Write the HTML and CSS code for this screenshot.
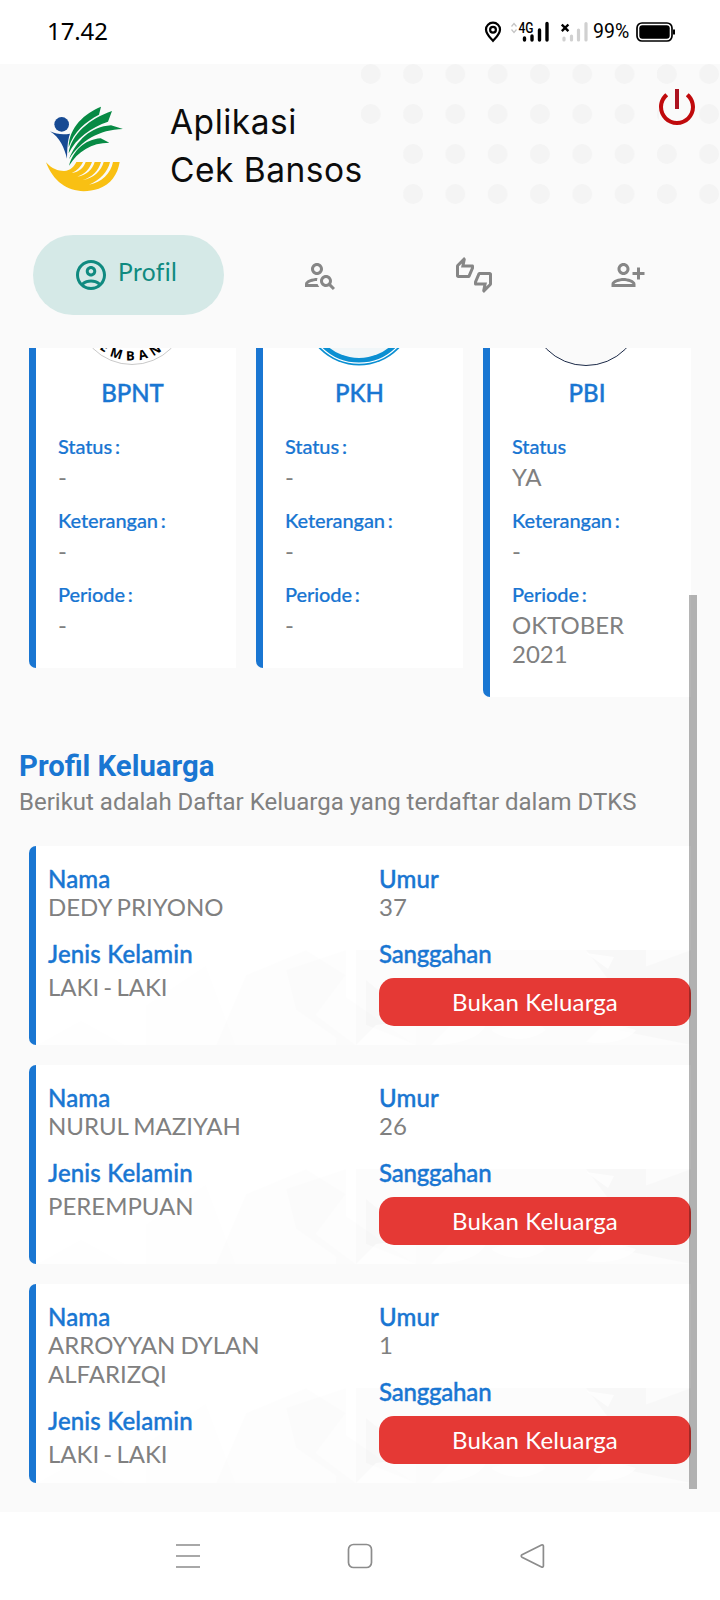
FILE: index.html
```html
<!DOCTYPE html>
<html lang="id">
<head>
  <meta charset="UTF-8">
  <title>Aplikasi Cek Bansos</title>
  <link rel="stylesheet" href="styles.css">
</head>
<body>
  <!-- shared faint triangle pattern for the family cards -->
  <svg width="0" height="0" class="defs">
    <symbol id="pattern" viewBox="0 0 655 95">
      <g fill="#000">
        <path opacity=".004" d="M0 95l45-25 45 25zM110 95V55l60-40 30 80z"/>
        <path opacity=".006" d="M180 95l30-70 60-25 40 25-30 40 40 30z"/>
        <path opacity=".008" d="M250 20l60-20v95l-50-35zM300 40l80 55h-80z"/>
        <path opacity=".012" d="M320 0h335v95H320z"/>
        <path opacity=".016" d="M330 30l50 40v25l-50-20zM550 0h60v30l-30 10zM600 20l55-20v60zM655 60v35l-75-15z"/>
      </g>
      <g fill="#fff">
        <path opacity=".7" d="M340 75l40-5v25h-60zM455 80c15 12 40 12 55 0l-15-12zM395 95c30 0 50-8 55-20l-30-5zM550 92c25 4 45-4 50-12l-30-8zM550 3l22 16 6-12z"/>
      </g>
    </symbol>
  </svg>

  <div class="statusbar">
    <span class="time">17.42</span>
    <div class="status-icons">
      <svg class="pin" width="18" height="22" viewBox="0 0 18 22">
        <path d="M9 1.700c-4 0-7 3-7 6.800 0 4.600 4 7.900 7 11.300 3-3.400 7-6.700 7-11.300 0-3.800-3-6.800-7-6.800z" fill="none" stroke="#000" stroke-width="2.200"/>
        <circle cx="9" cy="8.700" r="2.900" fill="none" stroke="#000" stroke-width="2.200"/>
      </svg>
      <svg class="signal" width="40" height="22" viewBox="0 0 40 22">
        <path d="M1.500 5.500l2.500-3 2.500 3M1.500 8.500l2.500 3 2.500-3" fill="none" stroke="#c4c4c4" stroke-width="1.200"/>
        <text x="8.500" y="12" textLength="15" lengthAdjust="spacingAndGlyphs">4G</text>
        <path d="M14.500 17v2M22 15v4M29.500 9v10M37 2.500V19" stroke="#000" stroke-width="3.400" stroke-linecap="round"/>
      </svg>
      <svg class="signal-off" width="28" height="22" viewBox="0 0 28 22">
        <path d="M.8 3.500l6.600 6.600M7.400 3.500L.8 10.100" stroke="#000" stroke-width="2.400"/>
        <path d="M3 17v2M10.500 15v4M17.500 9v10M25 2.500V19" stroke="#d0d0d0" stroke-width="3.200" stroke-linecap="round"/>
      </svg>
      <span class="percent">99%</span>
      <svg class="battery" width="40" height="22" viewBox="0 0 40 22">
        <rect x="1" y="2" width="35" height="18" rx="5" fill="none" stroke="#000" stroke-width="1.700"/>
        <rect x="3.300" y="4.200" width="30.400" height="13.600" rx="3" fill="#000"/>
        <path d="M38 8.500v5" stroke="#000" stroke-width="2"/>
      </svg>
    </div>
  </div>

  <header class="header">
    <svg class="dots" width="361" height="156" viewBox="0 0 361 156">
      <defs>
        <pattern id="dot" width="42.300" height="40" patternUnits="userSpaceOnUse">
          <circle cx="11.700" cy="10" r="10" fill="#f4f4f4"/>
        </pattern>
      </defs>
      <rect width="300" height="76" fill="url(#dot)"/>
      <rect x="294" width="67" height="26" fill="url(#dot)"/>
      <rect x="336" y="26" width="25" height="50" fill="url(#dot)"/>
      <rect x="42.300" y="76" width="319" height="80" fill="url(#dot)"/>
    </svg>
    <svg class="logo" width="80" height="88" viewBox="135 315 240 264">
      <circle cx="185" cy="373" r="22" fill="#174a93"/>
      <path fill="#174a93" d="M150 394c18 9 40 11 60 7-8 22-8 46-9 75-7-30-22-65-51-82z"/>
      <g fill="#078a44">
        <path d="M303 320c-48 20-96 60-97 122 16-48 50-76 91-98z"/>
        <path d="M336 333c-66 22-123 70-130 127 22-46 68-78 118-95z"/>
        <path d="M207 478c22-56 65-98 126-102l36 11c-72 2-126 34-162 91z"/>
        <path d="M207 497c14-46 46-78 95-82l26 13c-54 0-94 26-121 69z"/>
      </g>
      <path fill="#f9c013" d="M138 487C156 507 174 513 192 513C212 512 222 500 229 486H249C243 500 232 512 215 519C238 516 251 503 257 486H276C269 507 255 522 232 530C261 526 277 508 284 486H303C296 511 277 532 247 541C281 535 304 512 311 486H330C323 516 301 540 267 554C306 547 332 520 339 486H359C353 524 332 553 296 566C228 588 166 561 138 487Z"/>
    </svg>
    <h1>Aplikasi<br>Cek Bansos</h1>
    <svg class="power" width="48" height="48" viewBox="0 0 24 24">
      <path fill="#c00a0c" d="M17.830 5.170l-1.420 1.420C17.990 7.860 19 9.810 19 12c0 3.870-3.130 7-7 7s-7-3.130-7-7c0-2.190 1.010-4.140 2.580-5.420L6.170 5.170C4.230 6.820 3 9.260 3 12c0 4.970 4.030 9 9 9s9-4.030 9-9c0-2.740-1.230-5.180-3.170-6.830z"/>
      <path fill="#ac1320" d="M13 3h-2v10h2V3z"/>
    </svg>
  </header>

  <nav class="tabs">
    <a class="tab active">
      <svg width="36" height="36" viewBox="0 0 24 24"><path d="M12 2C6.480 2 2 6.480 2 12s4.480 10 10 10 10-4.480 10-10S17.520 2 12 2zM7.350 18.500C8.660 17.560 10.260 17 12 17s3.340.56 4.650 1.500C15.340 19.440 13.740 20 12 20s-3.340-.56-4.650-1.500zm10.790-1.380C16.450 15.800 14.320 15 12 15s-4.450.8-6.140 2.120C4.700 15.730 4 13.950 4 12c0-4.420 3.580-8 8-8s8 3.580 8 8c0 1.950-.7 3.730-1.860 5.120z"/><path d="M12 6c-1.930 0-3.500 1.570-3.500 3.500S10.070 13 12 13s3.500-1.570 3.500-3.500S13.930 6 12 6zm0 5c-.83 0-1.500-.67-1.500-1.500S11.170 8 12 8s1.500.67 1.500 1.500S12.830 11 12 11z"/></svg>
      <span>Profil</span>
    </a>
    <a class="tab">
      <svg width="36" height="36" viewBox="0 0 24 24"><path d="M10 12c2.210 0 4-1.790 4-4s-1.790-4-4-4-4 1.790-4 4 1.790 4 4 4zm0-6c1.100 0 2 .9 2 2s-.9 2-2 2-2-.9-2-2 .9-2 2-2zM4 18c.22-.72 3.310-2 6-2 0-.7.13-1.370.35-1.990C7.620 13.910 2 15.270 2 18v2h9.540c-.52-.58-.93-1.250-1.190-2H4zM19.430 18.020c.36-.59.57-1.280.57-2.020 0-2.210-1.790-4-4-4s-4 1.790-4 4 1.790 4 4 4c.74 0 1.430-.22 2.020-.57L20.590 22 22 20.590l-2.570-2.570zM16 18c-1.100 0-2-.9-2-2s.9-2 2-2 2 .9 2 2-.9 2-2 2z"/></svg>
    </a>
    <a class="tab">
      <svg width="36" height="36" viewBox="0 0 24 24"><path d="M12 6c0-.55-.45-1-1-1H5.820l.66-3.180.02-.23c0-.31-.13-.59-.33-.8L5.380 0 .44 4.940C.17 5.210 0 5.590 0 6v6.500c0 .83.67 1.500 1.500 1.500h6.750c.62 0 1.150-.38 1.380-.91l2.260-5.290c.07-.17.11-.36.11-.55V6zm-2 1.130L7.920 12H2V6.210l1.930-1.930L3.360 7H10v.13zM22.500 10h-6.750c-.62 0-1.150.38-1.380.91l-2.260 5.290c-.07.17-.11.36-.11.55V18c0 .55.45 1 1 1h5.180l-.66 3.180-.02.24c0 .31.13.59.33.8l.79.78 4.940-4.940c.27-.27.44-.65.44-1.060v-6.500c0-.83-.67-1.500-1.500-1.500zm-.5 7.790l-1.930 1.930.57-2.720H14v-.13L16.080 12H22v5.790z"/></svg>
    </a>
    <a class="tab">
      <svg width="36" height="36" viewBox="0 0 24 24"><path d="M13 8c0-2.210-1.790-4-4-4S5 5.790 5 8s1.790 4 4 4 4-1.790 4-4zm-2 0c0 1.100-.9 2-2 2s-2-.9-2-2 .9-2 2-2 2 .9 2 2zM1 18v2h16v-2c0-2.660-5.330-4-8-4s-8 1.340-8 4zm2 0c.2-.71 3.300-2 6-2 2.690 0 5.770 1.280 6 2H3zM20 15v-3h3v-2h-3V7h-2v3h-3v2h3v3h2z"/></svg>
    </a>
  </nav>

  <main class="content">
    <section class="programs">
      <div class="program">
        <svg class="badge" width="112" height="112" viewBox="0 0 112 112">
          <circle cx="56" cy="55" r="55.500" fill="#fff" stroke="#bbb" stroke-width=".8"/>
          <path id="arc" d="M5.500 56a50.500 50.500 0 0 0 101 0" fill="none"/>
          <text class="badge-text"><textPath href="#arc" startOffset="50.500%" text-anchor="middle">EMBAN</textPath></text>
        </svg>
        <h2>BPNT</h2>
        <dl>
          <dt>Status :</dt><dd>-</dd>
          <dt>Keterangan :</dt><dd>-</dd>
          <dt>Periode :</dt><dd>-</dd>
        </dl>
      </div>
      <div class="program">
        <svg class="badge" width="112" height="112" viewBox="0 0 112 112">
          <circle cx="56" cy="56" r="55.500" fill="#0a8fd2"/>
          <circle cx="56" cy="56" r="53.200" fill="none" stroke="#fff" stroke-width="1.200"/>
          <circle cx="56" cy="56" r="48" fill="#f0f6f8"/>
        </svg>
        <h2>PKH</h2>
        <dl>
          <dt>Status :</dt><dd>-</dd>
          <dt>Keterangan :</dt><dd>-</dd>
          <dt>Periode :</dt><dd>-</dd>
        </dl>
      </div>
      <div class="program">
        <svg class="badge" width="112" height="112" viewBox="0 0 112 112">
          <circle cx="56" cy="56" r="55.500" fill="#fafafa" stroke="#1c2a48"/>
        </svg>
        <h2>PBI</h2>
        <dl>
          <dt>Status</dt><dd>YA</dd>
          <dt>Keterangan :</dt><dd>-</dd>
          <dt>Periode :</dt><dd>OKTOBER 2021</dd>
        </dl>
      </div>
    </section>

    <section class="family">
      <h3>Profil Keluarga</h3>
      <p class="subtitle">Berikut adalah Daftar Keluarga yang terdaftar dalam DTKS</p>

      <div class="member">
        <svg class="member-bg"><use href="#pattern"/></svg>
        <div class="col">
          <span class="label">Nama</span>
          <span class="value name">DEDY PRIYONO</span>
          <span class="label">Jenis Kelamin</span>
          <span class="value gender">LAKI - LAKI</span>
        </div>
        <div class="col">
          <span class="label">Umur</span>
          <span class="value name">37</span>
          <span class="label tight">Sanggahan</span>
          <button>Bukan Keluarga</button>
        </div>
      </div>

      <div class="member">
        <svg class="member-bg"><use href="#pattern"/></svg>
        <div class="col">
          <span class="label">Nama</span>
          <span class="value name">NURUL MAZIYAH</span>
          <span class="label">Jenis Kelamin</span>
          <span class="value gender">PEREMPUAN</span>
        </div>
        <div class="col">
          <span class="label">Umur</span>
          <span class="value name">26</span>
          <span class="label tight">Sanggahan</span>
          <button>Bukan Keluarga</button>
        </div>
      </div>

      <div class="member">
        <svg class="member-bg"><use href="#pattern"/></svg>
        <div class="col">
          <span class="label">Nama</span>
          <span class="value name">ARROYYAN DYLAN ALFARIZQI</span>
          <span class="label">Jenis Kelamin</span>
          <span class="value gender">LAKI - LAKI</span>
        </div>
        <div class="col">
          <span class="label">Umur</span>
          <span class="value name">1</span>
          <span class="label tight">Sanggahan</span>
          <button>Bukan Keluarga</button>
        </div>
      </div>
    </section>
    <div class="scrollbar"></div>
  </main>

  <footer class="navbar">
    <svg width="26" height="26" viewBox="0 0 26 26"><path d="M1 2h24M1 13h24M1 24h24"/></svg>
    <svg width="26" height="26" viewBox="0 0 26 26"><rect x="1.500" y="1.500" width="23" height="23" rx="5"/></svg>
    <svg width="26" height="26" viewBox="0 0 26 26"><path d="M3 11.800L22.500 2c1-.5 1.900 0 1.900 1v20c0 1-.9 1.500-1.900 1L3 14.200c-1-.6-1-1.800 0-2.400z"/></svg>
  </footer>
</body>
</html>
```

FILE: styles.css
```css
* {
  box-sizing: border-box;
}
body {
  margin: 0;
  width: 720px;
  height: 1600px;
  display: flex;
  flex-direction: column;
  overflow: hidden;
  background-color: #fafafa;
  font-family: Lato, sans-serif;
  font-size: 24px;
  line-height: 29px;
}
h1, h2, h3, p, dl, dd {
  margin: 0;
}
svg {
  display: block;
  flex-shrink: 0;
}
.defs {
  position: absolute;
}

/* Status bar */
.statusbar {
  flex: 0 0 64px;
  display: flex;
  align-items: center;
  justify-content: space-between;
  padding: 0 44px 0 47px;
  background: #fff;
  color: #000;
}
.time {
  margin-top: -3px;
  font-family: "Noto Sans", sans-serif;
  font-size: 24px;
  letter-spacing: -0.1px;
}
.status-icons {
  display: flex;
  align-items: center;
}
.signal {
  margin-left: 8px;
}
.signal text {
  font: 500 14px Roboto, sans-serif;
}
.signal-off {
  margin-left: 11px;
}
.percent {
  margin: -1px 0 0 4px;
  width: 39px;
  font-family: Roboto, sans-serif;
  font-size: 19.5px;
}
.battery {
  margin-left: 4px;
}

/* Header */
.header {
  position: relative;
  flex: 0 0 156px;
  display: flex;
  padding-left: 45px;
}
.dots {
  position: absolute;
  top: 0;
  right: 0;
}
.logo {
  margin-top: 41px;
}
.header h1 {
  position: relative;
  margin: 34px 0 0 45px;
  font-family: Inter, sans-serif;
  font-size: 33.5px;
  font-weight: 400;
  letter-spacing: 0.5px;
  line-height: 48px;
  color: #0c0c0c;
}
.power {
  position: relative;
  margin: 19px 19px 0 auto;
}

/* Tabs */
.tabs {
  flex: 0 0 128px;
  display: grid;
  grid-template-columns: 191px 192px 116px 192px;
  padding: 15px 0 0 33px;
}
.tab {
  height: 80px;
  display: flex;
  align-items: center;
  justify-content: center;
  color: #868686;
  fill: #868686;
}
.tab.active {
  justify-content: flex-start;
  padding-left: 40px;
  gap: 9px;
  border-radius: 40px;
  background: #d5e9e7;
  color: #0f8a80;
  fill: #0f8a80;
}
.tab.active span {
  margin-top: -8px;
  font-size: 24.5px;
  letter-spacing: 0.4px;
}

/* Content */
.content {
  position: relative;
  flex: 1;
  overflow: hidden;
}
.programs {
  display: flex;
  align-items: flex-start;
  gap: 20px;
  margin: -114px 0 0 29px;
}
.program {
  width: 207px;
  padding: 20px 22px 29px;
  background: #fff;
  border-left: 7px solid #1976d2;
  border-radius: 7px 0 0 7px;
  word-spacing: -2px;
}
.program:last-child {
  width: 208px;
}
.badge {
  margin: 0 auto 12px 18px;
}
.badge-text {
  font: 700 13px "Open Sans", sans-serif;
  letter-spacing: 5px;
}
.program h2 {
  margin: 0 7px 27px 0;
  font-size: 24px;
  font-weight: 500;
  text-align: center;
  color: #1976d2;
  -webkit-text-stroke: 0.4px #1976d2;
}
.program dt {
  margin-bottom: 4px;
  font-size: 20px;
  font-weight: 500;
  line-height: 24px;
  letter-spacing: -0.1px;
  color: #1976d2;
  -webkit-text-stroke: 0.2px #1976d2;
}
.program dd {
  margin-bottom: 17px;
  color: #808080;
}
.program dd:last-child {
  margin-bottom: 0;
}

/* Family */
.family {
  margin-top: 53px;
}
.family h3 {
  padding-left: 19px;
  font: 700 29.3px/33px Roboto, sans-serif;
  color: #1976d2;
}
.subtitle {
  position: relative;
  margin: 5px 0 30px;
  padding-left: 19px;
  font: 24px/28px Roboto, sans-serif;
  color: #808080;
}
.member {
  position: relative;
  display: grid;
  grid-template-columns: 331px 312px;
  width: 662px;
  height: 199px;
  margin: 0 0 20px 29px;
  padding: 18px 0 0 12px;
  background: #fff;
  border-left: 7px solid #1976d2;
  border-radius: 7px 0 0 7px;
}
.member-bg {
  position: absolute;
  left: 0;
  bottom: 0;
  width: 655px;
  height: 95px;
}
.col {
  position: relative;
  display: flex;
  flex-direction: column;
}
.label {
  font-weight: 500;
  color: #1976d2;
  letter-spacing: 0.15px;
  -webkit-text-stroke: 0.4px #1976d2;
}
.label.tight {
  letter-spacing: -0.2px;
}
.value {
  color: #808080;
}
.name {
  width: 240px;
  margin: -1px 0 18px;
  word-spacing: -1px;
}
.gender {
  margin-top: 4px;
  word-spacing: -2px;
}
button {
  height: 48px;
  margin-top: 10px;
  padding: 0 0 2px;
  border: none;
  border-radius: 15px;
  background: #e53935;
  color: #fff;
  font: 24px/29px Lato, sans-serif;
  letter-spacing: 0.15px;
}
.scrollbar {
  position: absolute;
  top: 247px;
  right: 23px;
  width: 8px;
  height: 894px;
  background: rgba(0, 0, 0, 0.29);
}

/* Navigation bar */
.navbar {
  flex: 0 0 88px;
  display: flex;
  gap: 146px;
  padding: 31px 0 0 175px;
  background: #fff;
  fill: none;
  stroke: #8c8c8c;
  stroke-width: 1.7;
}
```
